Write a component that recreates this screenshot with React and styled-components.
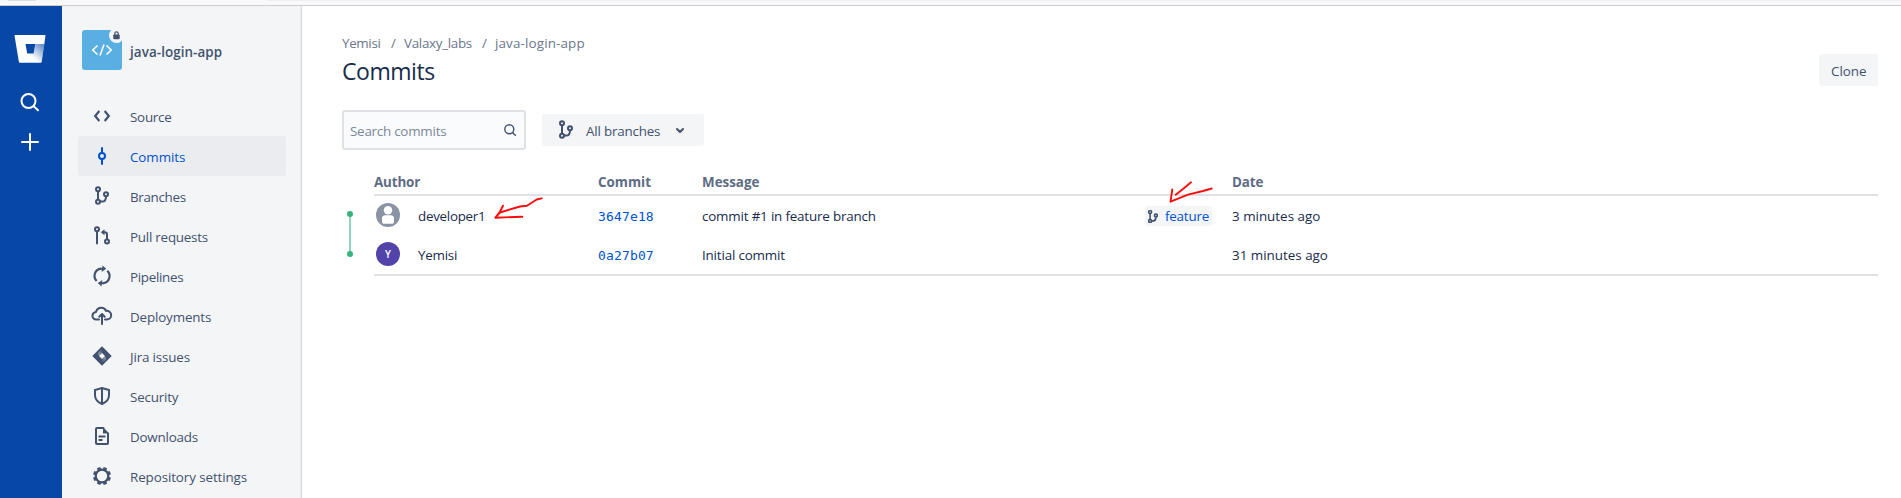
import React from "react";
import styled, { createGlobalStyle } from "styled-components";

const Global = createGlobalStyle`
  * { box-sizing: border-box; }
  html, body { margin: 0; height: 100%; overflow: hidden; }
  body {
    background: #fff;
    color: #172b4d;
    font: 400 13.4px/20px "Open Sans", "Noto Sans", sans-serif;
  }
  svg { display: block; flex: none; }
`;

const Page = styled.div`
  position: relative;
  display: flex;
  flex-direction: column;
  width: 1901px;
  height: 498px;
  overflow: hidden;
`;
const BrowserEdge = styled.div`
  flex: none;
  display: flex;
  justify-content: flex-start;
  height: 6px;
  padding-left: 8px;
  background: #f9f9fb;
  border-bottom: 1px solid #cccccf;
`;
const EdgeTab = styled.span`
  width: ${(p) => p.$width}px;
  height: 1px;
  margin-right: ${(p) => p.$gap || 0}px;
  background: ${(p) => p.$color};
`;
const Body = styled.div`
  display: flex;
  flex: 1;
  min-height: 0;
`;
const Rail = styled.nav`
  flex: none;
  display: flex;
  flex-direction: column;
  align-items: center;
  width: 62px;
  padding: 23px 2px 0 0;
  background: #0747a6;
  color: #fff;
`;
const RailItem = styled.div`
  display: flex;
  align-items: center;
  justify-content: center;
  height: 40px;
  margin-bottom: ${(p) => p.$after || 0}px;
`;
const Sidebar = styled.aside`
  flex: none;
  width: 240px;
  padding: 24px 15px 0 16px;
  background: #f4f5f7;
  border-right: 1px solid #d9dade;
  box-shadow: inset -1px 0 0 #ebecf0;
  color: #42526e;
`;
const Repo = styled.div`
  display: flex;
  align-items: center;
  height: 40px;
  margin: 0 0 26px 4px;
  gap: 8px;
`;
const RepoAvatar = styled.div`
  position: relative;
  display: flex;
  align-items: center;
  justify-content: center;
  width: 40px;
  height: 40px;
  border-radius: 3px;
  background: #59afe1;
`;
const LockBadge = styled.span`
  position: absolute;
  top: -2px;
  right: -2px;
  display: flex;
  align-items: center;
  justify-content: center;
  width: 15px;
  height: 15px;
  border-radius: 50%;
  background: #f4f5f7;
`;
const RepoName = styled.strong`
  padding-top: 3px;
  font-weight: 600;
  letter-spacing: 0.08px;
`;
const MenuItem = styled.a`
  display: flex;
  align-items: center;
  gap: 16px;
  height: 40px;
  padding: 0 12px;
  border-radius: 3px;
  background: ${(p) => (p.$active ? "#ebecf0" : "transparent")};
  color: ${(p) => (p.$active ? "#0052cc" : "#42526e")};
`;
const Label = styled.span`
  padding-top: 2px;
  white-space: nowrap;
  letter-spacing: ${(p) => p.$track ?? -0.2}px;
`;
const BranchLabel = styled(Label)`
  width: 82px;
  margin-left: 8px;
  text-align: left;
`;
const Main = styled.main`
  flex: 1;
  min-width: 0;
  padding: 27px 23px 0 40px;
`;
const Crumbs = styled.div`
  display: flex;
  height: 20px;
  color: #6b778c;
`;
const Crumb = styled.span`
  width: ${(p) => p.$width}px;
  white-space: nowrap;
  letter-spacing: ${(p) => p.$track || 0}px;
`;
const TitleRow = styled.div`
  display: flex;
  justify-content: space-between;
  height: 57px;
`;
const Title = styled.h1`
  margin: 4px 0 0;
  font-weight: 400;
  font-size: 23px;
  line-height: 28px;
  letter-spacing: -0.45px;
`;
const Button = styled.button`
  display: flex;
  align-items: center;
  height: 32px;
  width: ${(p) => p.$width}px;
  padding: 0 12px;
  margin-top: ${(p) => p.$top || 0}px;
  border: 0;
  border-radius: 3px;
  background: #f4f5f7;
  color: #42526e;
  font: inherit;
`;
const Filters = styled.div`
  display: flex;
  align-items: center;
  gap: 16px;
  height: 40px;
`;
const SearchBox = styled.div`
  display: flex;
  align-items: center;
  justify-content: space-between;
  width: 184px;
  height: 40px;
  padding: 0 8px 0 6px;
  border: 2px solid #dfe1e6;
  border-radius: 3px;
  background: #fafbfc;
  color: #7a869a;
`;
const History = styled.section`
  display: flex;
  margin-top: 20px;
`;
const Graph = styled.div`
  width: 32px;
  padding: 40px 0 0 4px;
`;
const Table = styled.div`
  flex: 1;
  border-bottom: 2px solid #dfe1e6;
`;
const Row = styled.div`
  display: grid;
  grid-template-columns: 44px 180px 104px 443px 87px 1fr;
  align-items: center;
  height: ${(p) => p.$height}px;
`;
const HeadRow = styled(Row)`
  height: 26px;
  padding-bottom: 6px;
  border-bottom: 2px solid #dfe1e6;
  color: #5e6c84;
  font-weight: 700;
  grid-template-columns: 224px 104px 530px 1fr;
`;
const Hash = styled.a`
  padding-top: 4px;
  color: #0052cc;
  font: 13px/20px "DejaVu Sans Mono", monospace;
  letter-spacing: 0.15px;
`;
const Avatar = styled.span`
  display: flex;
  align-items: center;
  justify-content: center;
  width: 24px;
  height: 24px;
  margin-left: 2px;
  border-radius: 50%;
  background: ${(p) => p.$color};
  color: #fff;
  font-size: 10px;
  font-weight: 600;
`;
const BranchTag = styled.span`
  display: flex;
  align-items: center;
  gap: 7px;
  width: 67px;
  height: 20px;
  padding-left: 3px;
  margin-top: 2px;
  border-radius: 3px;
  background: #f4f5f7;
  color: #0052cc;
  letter-spacing: -0.2px;
`;
const Annotations = styled.svg`
  position: absolute;
  left: 0;
  top: 0;
  pointer-events: none;
`;

const Icon = ({ size = 24, children, color = "currentColor", sw = 2 }) => (
  <svg width={size} height={size} viewBox="0 0 24 24" fill="none" stroke={color}
    strokeWidth={sw} strokeLinecap="round" strokeLinejoin="round">{children}</svg>
);
const BranchShape = () => (
  <>
    <circle cx="8" cy="5.3" r="2" />
    <circle cx="8" cy="17.8" r="2" />
    <circle cx="16" cy="10.2" r="2" />
    <path d="M8 8v7M10 17.6h2.5c2.400 0 3.300-1.500 3.500-4.900" />
  </>
);

const icons = {
  source: <path d="M9.300 7L5.200 12l4.100 5M14.700 7l4.100 5-4.100 5" strokeLinecap="butt" strokeLinejoin="miter" strokeWidth="2.200" />,
  commits: <><circle cx="12" cy="12" r="3" /><path d="M12 4v4.500M12 15.500V20" /></>,
  branches: <BranchShape />,
  pulls: (
    <>
      <circle cx="7" cy="5.300" r="2" />
      <circle cx="17" cy="17.500" r="2" />
      <path d="M7 7.500v12M17 15V10.500c0-1.600-.7-2.300-2.300-2.300h-2" />
      <path d="M14.500 5.200v6L10.800 8.200z" fill="currentColor" stroke="none" />
    </>
  ),
  pipelines: (
    <>
      <path d="M6.700 17A7.200 7.200 0 0 1 11 4.700M17.300 6.800A7.200 7.200 0 0 1 13 19.200" strokeLinecap="butt" strokeWidth="2.200" />
      <path d="M10.800 4.700h3M13.200 19.200h-3" />
      <path d="M12.600 1.500l3.600 3.300-4.600 3.200z" fill="currentColor" stroke="none" />
      <path d="M11.400 22.400l-3.600-3.300 4.600-3.200z" fill="currentColor" stroke="none" />
    </>
  ),
  deployments: (
    <>
      <path d="M9 15.500H6.300A3.700 3.700 0 0 1 6 8.100C6.700 5.400 8.600 3.800 11.200 3.800c2.300 0 4 1.100 4.800 3.100 3-.3 5.200 1.700 5.200 4.300 0 2.600-1.900 4.300-4.400 4.300H15" />
      <path d="M12 20V11M9.300 12.700L12 10l2.700 2.700" />
    </>
  ),
  jira: (
    <>
      <defs>
        <linearGradient id="jiraTop" x1="12" y1="4" x2="9" y2="12" gradientUnits="userSpaceOnUse">
          <stop offset="0.200" stopColor="#42526e" />
          <stop offset="1" stopColor="#a5adba" />
        </linearGradient>
        <linearGradient id="jiraBottom" x1="12" y1="20" x2="15" y2="12" gradientUnits="userSpaceOnUse">
          <stop offset="0.200" stopColor="#42526e" />
          <stop offset="1" stopColor="#a5adba" />
        </linearGradient>
      </defs>
      <path d="M12 2.300L21.700 12 12 21.700 2.300 12z" fill="currentColor" stroke="none" />
      <path d="M12 3v5.800L9 11.800 7.800 9z" fill="url(#jiraTop)" stroke="none" />
      <path d="M12 21v-5.800l3-3 1.200 2.800z" fill="url(#jiraBottom)" stroke="none" />
      <path d="M12 9l3 3-3 3-3-3z" fill="#f4f5f7" stroke="none" />
    </>
  ),
  security: <path d="M12 4l7 2v5.300c0 4-3 7-7 8.700-4-1.700-7-4.700-7-8.700V6zM12 4v16" strokeLinejoin="miter" />,
  downloads: (
    <>
      <path d="M18 9.500V19a1 1 0 0 1-1 1H7a1 1 0 0 1-1-1V5a1 1 0 0 1 1-1h6.500" />
      <path d="M13 3v6.500h6.200z" fill="currentColor" stroke="none" />
      <path d="M8.500 12.500h7M8.500 16h4" strokeLinecap="butt" />
    </>
  ),
  settings: (
    <>
      <circle cx="12" cy="12" r="6.300" strokeWidth="2.300" />
      {[22.5, 67.5, 112.5, 157.5, 202.5, 247.5, 292.5, 337.5].map((a) => (
        <path key={a} d="M12 5.500V3" strokeWidth="3.600" strokeLinecap="butt" transform={`rotate(${a} 12 12)`} />
      ))}
    </>
  ),
};

const menu = [
  ["source", "Source", -0.25],
  ["commits", "Commits", -0.08],
  ["branches", "Branches", -0.32],
  ["pulls", "Pull requests", -0.23],
  ["pipelines", "Pipelines", -0.3],
  ["deployments", "Deployments", -0.15],
  ["jira", "Jira issues", -0.15],
  ["security", "Security", -0.2],
  ["downloads", "Downloads", -0.2],
  ["settings", "Repository settings", -0.1],
];

const BitbucketLogo = () => (
  <svg width="32" height="30" viewBox="0 0 32 30">
    <defs>
      <linearGradient id="fold" x1="29" y1="9" x2="16" y2="24" gradientUnits="userSpaceOnUse">
        <stop offset="0.100" stopColor="#0747a6" stopOpacity="0.600" />
        <stop offset="0.900" stopColor="#0747a6" stopOpacity="0" />
      </linearGradient>
    </defs>
    <path fillRule="evenodd" fill="#fff" d="M1 1h30a.5.5 0 0 1 .5.6L27.700 28a1 1 0 0 1-1 .8H5.900a1 1 0 0 1-1-.8L.5 1.600A.5.5 0 0 1 1 1zM11.500 10l1.700 9.500h6.400L21.300 10z" />
    <path fill="url(#fold)" d="M30.300 10h-9l-1.700 9.500h-6.400l-7.500 9.100.3.200h20.700a1 1 0 0 0 1-.8z" />
  </svg>
);

const Person = () => (
  <svg width="24" height="24" viewBox="0 0 24 24" fill="#fff">
    <circle cx="12" cy="7.300" r="4.200" />
    <path d="M6 14.800a2.700 2.700 0 0 1 2.700-2.500h6.600a2.700 2.700 0 0 1 2.700 2.500v4.500a2 2 0 0 1-1.500 1.500h-9a2 2 0 0 1-1.500-1.500z" />
  </svg>
);

export default function App() {
  return (
    <Page>
      <Global />
      <BrowserEdge>
        <EdgeTab $width={28} $gap={231} $color="#dcdce2" />
        <EdgeTab $width={1634} $color="#f0f0f4" />
      </BrowserEdge>
      <Body>
        <Rail>
          <RailItem $after={13}><BitbucketLogo /></RailItem>
          <RailItem>
            <svg width="20" height="20" viewBox="0 0 20 20" fill="none" stroke="#fff" strokeWidth="2" strokeLinecap="round">
              <circle cx="8.500" cy="9" r="7" /><path d="M13.700 14.200L18 18.300" />
            </svg>
          </RailItem>
          <RailItem>
            <svg width="20" height="20" viewBox="0 0 20 20" stroke="#fff" strokeWidth="2" strokeLinecap="round">
              <path d="M10 2v16M2 10h16" />
            </svg>
          </RailItem>
        </Rail>
        <Sidebar>
          <Repo>
            <RepoAvatar>
              <svg width="22" height="14" viewBox="0 0 22 14" fill="none" stroke="#fff" strokeWidth="1.600">
                <path d="M6.500 2.500L1.800 7l4.700 4.500M15.500 2.500L20.200 7l-4.700 4.500M13 1.500L9 12.500" />
              </svg>
              <LockBadge>
                <svg width="7" height="9" viewBox="0 0 7 9">
                  <path d="M1.800 4V2.500a1.700 1.700 0 0 1 3.400 0V4" fill="none" stroke="#42526e" strokeWidth="1.200" />
                  <rect x="0.300" y="3.500" width="6.400" height="4.800" rx="0.800" fill="#42526e" />
                </svg>
              </LockBadge>
            </RepoAvatar>
            <RepoName>java-login-app</RepoName>
          </Repo>
          {menu.map(([id, name, track]) => (
            <MenuItem key={id} $active={id === "commits"}>
              <Icon>{icons[id]}</Icon>
              <Label $track={track}>{name}</Label>
            </MenuItem>
          ))}
        </Sidebar>
        <Main>
          <Crumbs>
            <Crumb $width={49} $track={-0.35}>Yemisi</Crumb>
            <Crumb $width={13}>/</Crumb>
            <Crumb $width={78} $track={-0.3}>Valaxy_labs</Crumb>
            <Crumb $width={13}>/</Crumb>
            <Crumb $track={0.15}>java-login-app</Crumb>
          </Crumbs>
          <TitleRow>
            <Title>Commits</Title>
            <Button $width={59} $top={1}><Label $track={0}>Clone</Label></Button>
          </TitleRow>
          <Filters>
            <SearchBox>
              <Label $track={-0.24}>Search commits</Label>
              <svg width="12" height="12" viewBox="0 0 12 12" fill="none" stroke="#42526e" strokeWidth="1.400" strokeLinecap="round">
                <circle cx="5.300" cy="5.300" r="4.500" /><path d="M8.700 8.700L11.300 11.300" />
              </svg>
            </SearchBox>
            <Button $width={162}>
              <Icon>{icons.branches}</Icon>
              <BranchLabel>All branches</BranchLabel>
              <Icon><path d="M9 11l3 3 3-3" /></Icon>
            </Button>
          </Filters>
          <History>
            <Graph>
              <svg width="8" height="48" viewBox="0 0 8 48">
                <path d="M4 4v40" stroke="#8fd9b9" strokeWidth="2" />
                <circle cx="4" cy="4" r="3" fill="#36b37e" />
                <circle cx="4" cy="44" r="3" fill="#36b37e" />
              </svg>
            </Graph>
            <Table>
              <HeadRow>
                <Label $track={-0.15}>Author</Label>
                <Label $track={0}>Commit</Label>
                <Label $track={0}>Message</Label>
                <Label $track={-0.1}>Date</Label>
              </HeadRow>
              <Row $height={38}>
                <Avatar $color="#8993a4"><Person /></Avatar>
                <Label $track={-0.28}>developer1</Label>
                <Hash>3647e18</Hash>
                <Label $track={-0.18}>commit #1 in feature branch</Label>
                <BranchTag>
                  <svg width="10" height="13" viewBox="5.500 2.500 13 18" fill="none" stroke="#42526e" strokeWidth="2.200"><BranchShape /></svg>
                  <span>feature</span>
                </BranchTag>
                <Label $track={0}>3 minutes ago</Label>
              </Row>
              <Row $height={40}>
                <Avatar $color="#5243aa">Y</Avatar>
                <Label $track={-0.25}>Yemisi</Label>
                <Hash>0a27b07</Hash>
                <Label $track={-0.17}>Initial commit</Label>
                <span />
                <Label $track={0}>31 minutes ago</Label>
              </Row>
            </Table>
          </History>
        </Main>
      </Body>
      <Annotations width="1901" height="498" fill="none" stroke="#fb0d0d" strokeWidth="1.900" strokeLinecap="round" strokeLinejoin="round">
        <path d="M541.700 198.300L536.700 199.500 527 205.700 520 206.500 500 212.500 495.300 217.700 522.300 216.700M503 205.700L500 211.500 495.300 217.700" />
        <path d="M1211.700 188.500L1203 191 1188 194.700 1170.500 201.700 1172.300 189.500M1191 182.300L1183 189 1175.700 194.700" />
      </Annotations>
    </Page>
  );
}
